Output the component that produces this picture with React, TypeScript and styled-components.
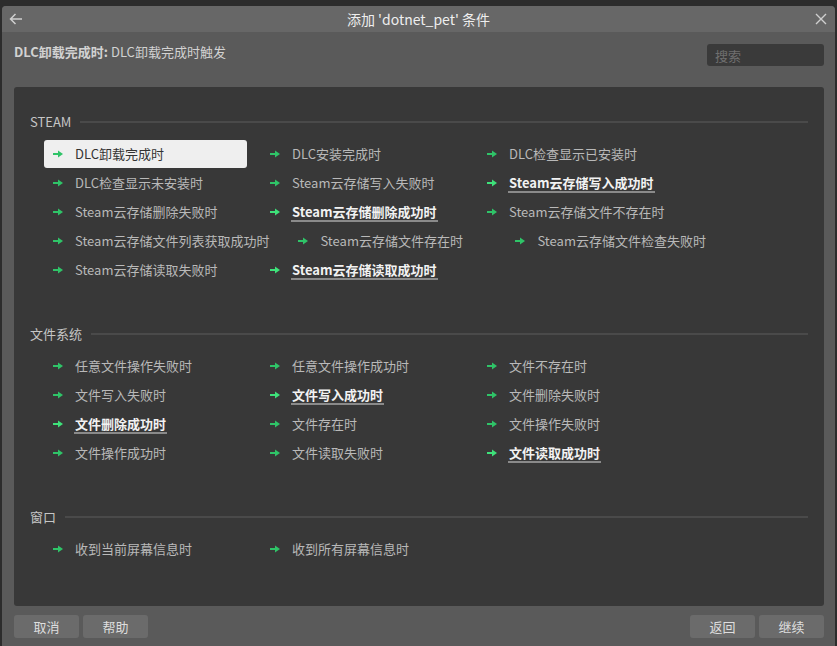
import React from "react";
import styled, { createGlobalStyle } from "styled-components";

const Global = createGlobalStyle`
  html, body { margin: 0; padding: 0; height: 100%; background: #2c2c2c; }
  #root { height: 100%; }
  * { box-sizing: border-box; }
  body { font-family: "Noto Sans CJK SC", "Noto Sans", sans-serif; }
`;

const Dialog = styled.div`
  margin: 6px 2px 0 2px;
  height: calc(100% - 6px);
  background: #5a5a5a;
  display: flex;
  flex-direction: column;
  border-radius: 4px 4px 0 0;
  overflow: hidden;
`;

const TitleBar = styled.div`
  height: 26px;
  flex: none;
  background: #676767;
  display: flex;
  align-items: center;
  justify-content: space-between;
  padding: 0 6px 0 6px;
  color: #ececec;
`;

const TitleText = styled.div`
  font-size: 14px;
  line-height: 26px;
  color: #eeeeee;
`;

const IconBtn = styled.div`
  width: 16px;
  height: 16px;
  display: flex;
  align-items: center;
  justify-content: center;
  color: #cfcfcf;
`;

const Header = styled.div`
  height: 55px;
  flex: none;
  display: flex;
  justify-content: space-between;
  align-items: flex-start;
  padding: 0 11px 0 12px;
`;

const Subtitle = styled.div`
  margin-top: 10px;
  font-size: 13px;
  line-height: 20px;
  color: #d2d2d2;
  b { font-weight: 700; }
`;

const Search = styled.input`
  margin-top: 12px;
  width: 117px;
  height: 22px;
  background: #3a3a3a;
  border: none;
  border-radius: 3px;
  padding: 0 8px;
  font-family: "Noto Sans CJK SC", sans-serif;
  font-size: 13px;
  color: #ddd;
  outline: none;
  &::placeholder { color: #6f6f6f; }
`;

const Panel = styled.div`
  flex: 1;
  margin: 0 11px 0 12px;
  background: #383838;
  border-radius: 3px;
  padding: 26px 16px 0 16px;
  display: flex;
  flex-direction: column;
  gap: 41px;
`;

const Section = styled.div`
  display: flex;
  flex-direction: column;
  gap: 9px;
`;

const SectionHead = styled.div`
  display: flex;
  align-items: center;
  gap: 9px;
  font-size: 13px;
  line-height: 18px;
  color: #c6c6c6;
`;

const Rule = styled.div`
  flex: 1;
  height: 2px;
  background: #4a4a4a;
`;

const Items = styled.div`
  margin-left: 14px;
  width: 700px;
  display: flex;
  flex-wrap: wrap;
  column-gap: 14px;
  row-gap: 1px;
`;

const Item = styled.div<{ $selected?: boolean }>`
  min-width: 203px;
  height: 28px;
  padding: 0 5px 0 9px;
  display: flex;
  align-items: center;
  gap: 12px;
  border-radius: 3px;
  background: ${(p) => (p.$selected ? "#efefef" : "transparent")};
  font-size: 13px;
  white-space: nowrap;
`;

const Label = styled.span<{ $selected?: boolean; $strong?: boolean }>`
  display: inline-block;
  line-height: 16px;
  color: ${(p) => (p.$selected ? "#333333" : p.$strong ? "#f2f2f2" : "#b9b9b9")};
  font-weight: ${(p) => (p.$strong ? 700 : 400)};
  border-bottom: 2px solid ${(p) => (p.$strong ? "#8a8a8a" : "transparent")};
  margin-top: 2px;
  padding: 0 1px;
  margin-left: -1px;
`;

const Footer = styled.div`
  height: 40px;
  flex: none;
  padding: 9px 11px 0 12px;
  display: flex;
  justify-content: space-between;
`;

const BtnGroup = styled.div`
  display: flex;
  gap: 4px;
`;

const Button = styled.button`
  width: 65px;
  height: 23px;
  border: none;
  border-radius: 3px;
  background: #6b6b6b;
  color: #dedede;
  font-family: "Noto Sans CJK SC", sans-serif;
  font-size: 13px;
  padding: 0;
`;

const GreenArrow = ({ bright }: { bright?: boolean }) => (
  <svg width="10" height="8" viewBox="0 0 10 8" style={{ flex: "none" }}>
    <path d="M0 4 H6" stroke={bright ? "#3ee27a" : "#2fc468"} strokeWidth="2" />
    <polygon points="5,0.5 10,4 5,7.5" fill={bright ? "#3ee27a" : "#2fc468"} />
  </svg>
);

type Entry = { t: string; s?: boolean; sel?: boolean };

const sections: { title: string; items: Entry[] }[] = [
  {
    title: "STEAM",
    items: [
      { t: "DLC卸载完成时", sel: true },
      { t: "DLC安装完成时" },
      { t: "DLC检查显示已安装时" },
      { t: "DLC检查显示未安装时" },
      { t: "Steam云存储写入失败时" },
      { t: "Steam云存储写入成功时", s: true },
      { t: "Steam云存储删除失败时" },
      { t: "Steam云存储删除成功时", s: true },
      { t: "Steam云存储文件不存在时" },
      { t: "Steam云存储文件列表获取成功时" },
      { t: "Steam云存储文件存在时" },
      { t: "Steam云存储文件检查失败时" },
      { t: "Steam云存储读取失败时" },
      { t: "Steam云存储读取成功时", s: true },
    ],
  },
  {
    title: "文件系统",
    items: [
      { t: "任意文件操作失败时" },
      { t: "任意文件操作成功时" },
      { t: "文件不存在时" },
      { t: "文件写入失败时" },
      { t: "文件写入成功时", s: true },
      { t: "文件删除失败时" },
      { t: "文件删除成功时", s: true },
      { t: "文件存在时" },
      { t: "文件操作失败时" },
      { t: "文件操作成功时" },
      { t: "文件读取失败时" },
      { t: "文件读取成功时", s: true },
    ],
  },
  {
    title: "窗口",
    items: [{ t: "收到当前屏幕信息时" }, { t: "收到所有屏幕信息时" }],
  },
];

export default function App() {
  return (
    <>
      <Global />
      <Dialog>
        <TitleBar>
          <IconBtn>
            <svg width="14" height="12" viewBox="0 0 14 12" fill="none" stroke="#cfcfcf" strokeWidth="1.5">
              <path d="M13 6 H1.5 M6.5 1 L1.5 6 L6.5 11" />
            </svg>
          </IconBtn>
          <TitleText>添加 'dotnet_pet' 条件</TitleText>
          <IconBtn>
            <svg width="12" height="12" viewBox="0 0 12 12" fill="none" stroke="#cfcfcf" strokeWidth="1.4">
              <path d="M1 1 L11 11 M11 1 L1 11" />
            </svg>
          </IconBtn>
        </TitleBar>
        <Header>
          <Subtitle>
            <b>DLC卸载完成时:</b> DLC卸载完成时触发
          </Subtitle>
          <Search placeholder="搜索" />
        </Header>
        <Panel>
          {sections.map((sec) => (
            <Section key={sec.title}>
              <SectionHead>
                <span>{sec.title}</span>
                <Rule />
              </SectionHead>
              <Items>
                {sec.items.map((it) => (
                  <Item key={it.t} $selected={it.sel}>
                    <GreenArrow bright={it.s} />
                    <Label $selected={it.sel} $strong={it.s}>
                      {it.t}
                    </Label>
                  </Item>
                ))}
              </Items>
            </Section>
          ))}
        </Panel>
        <Footer>
          <BtnGroup>
            <Button>取消</Button>
            <Button>帮助</Button>
          </BtnGroup>
          <BtnGroup>
            <Button>返回</Button>
            <Button>继续</Button>
          </BtnGroup>
        </Footer>
      </Dialog>
    </>
  );
}
